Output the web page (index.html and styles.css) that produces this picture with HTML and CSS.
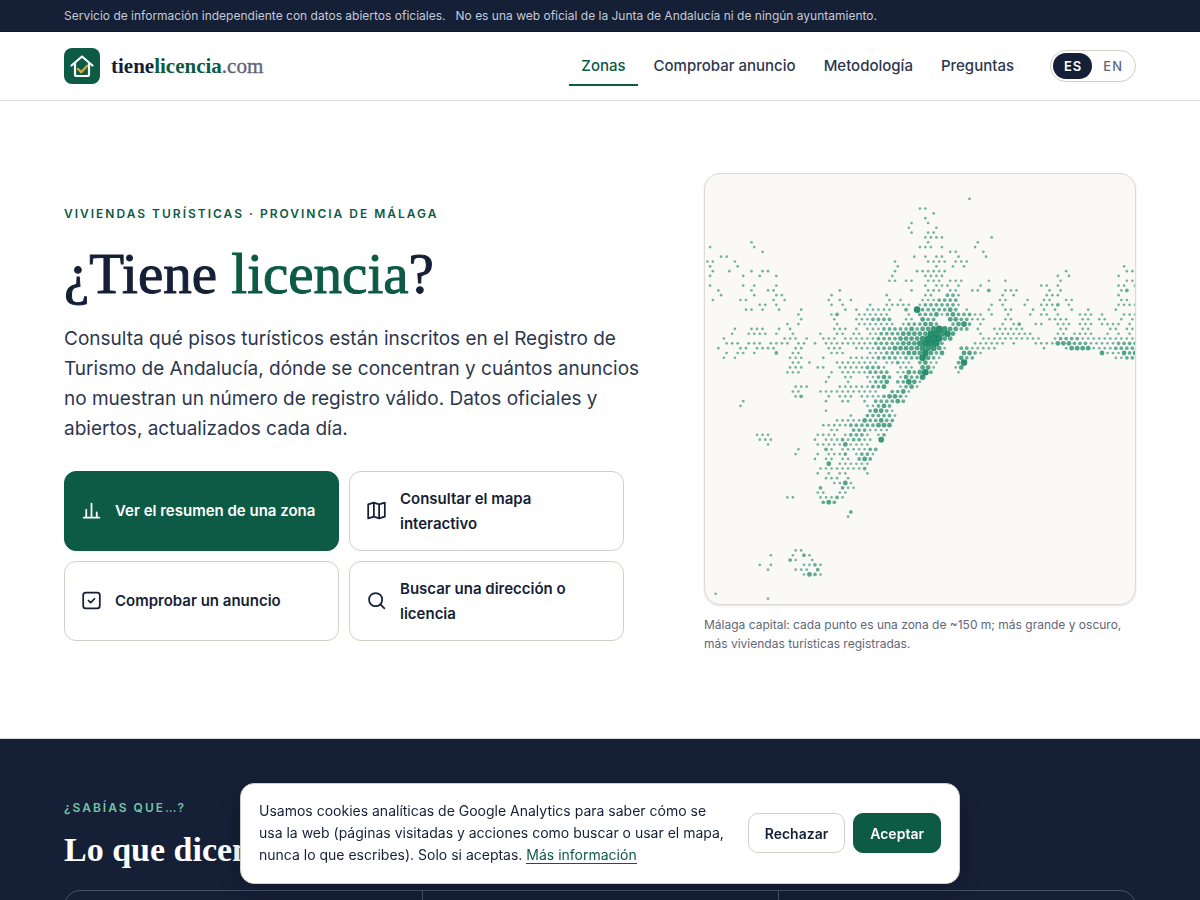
FILE: index.html
```html
<!DOCTYPE html>
<html lang="es">
<head>
<meta charset="utf-8">
<meta name="viewport" content="width=device-width, initial-scale=1">
<title>tienelicencia.com</title>
<link rel="stylesheet" href="styles.css">
</head>
<body>
<div class="notice">
  <div class="wrap notice-text"><span>Servicio de información independiente con datos abiertos oficiales.</span><span>No es una web oficial de la Junta de Andalucía ni de ningún ayuntamiento.</span></div>
</div>
<header class="header">
  <div class="wrap header-row">
    <a class="brand" href="#">
      <svg class="brand-mark" viewBox="0 0 36 36" fill="none" stroke-linecap="round" stroke-linejoin="round" aria-hidden="true">
        <rect width="36" height="36" rx="8" fill="#0d5a45"/>
        <path d="M7.500 17.500 18 8.500l10.500 9M11 15v11.500q0 1.500 1.500 1.500h11q1.500 0 1.500-1.500V15" stroke="#fff" stroke-width="2.200"/>
        <path d="m14 21 3.200 3.200 6-6.400" stroke="#d9a63a" stroke-width="2.400"/>
      </svg>
      <span class="brand-name">tiene<b>licencia</b><i>.com</i></span>
    </a>
    <nav class="nav" aria-label="Principal">
      <a class="nav-link current" href="#">Zonas</a>
      <a class="nav-link" href="#">Comprobar anuncio</a>
      <a class="nav-link" href="#">Metodología</a>
      <a class="nav-link" href="#">Preguntas</a>
    </nav>
    <div class="lang"><a class="lang-link selected" href="#">ES</a><a class="lang-link" href="#">EN</a></div>
  </div>
</header>
<main>
  <section class="hero">
    <div class="wrap hero-grid">
      <div class="intro">
        <p class="eyebrow">Viviendas turísticas · Provincia de Málaga</p>
        <h1 class="title">¿Tiene <span>licencia</span>?</h1>
        <p class="lead">Consulta qué pisos turísticos están inscritos en el Registro de Turismo de Andalucía, dónde se concentran y cuántos anuncios no muestran un número de registro válido. Datos oficiales y abiertos, actualizados cada día.</p>
        <div class="actions">
          <a class="action primary" href="#">
            <svg class="icon" viewBox="0 0 24 24" aria-hidden="true"><path d="M3 20h18M6 20v-9M12 20V4M18 20v-6"/></svg>
            <span>Ver el resumen de una zona</span>
          </a>
          <a class="action" href="#">
            <svg class="icon" viewBox="0 0 24 24" aria-hidden="true"><path d="M9 3 2.500 5v16L9 19l6 2 6.500-2V3L15 5 9 3ZM9 3v16M15 5v16"/></svg>
            <span>Consultar el mapa interactivo</span>
          </a>
          <a class="action" href="#">
            <svg class="icon" viewBox="0 0 24 24" aria-hidden="true"><rect x="2.500" y="3" width="19" height="18" rx="3"/><path d="m8.500 12 2.500 2.500 4.500-4.500"/></svg>
            <span>Comprobar un anuncio</span>
          </a>
          <a class="action" href="#">
            <svg class="icon" viewBox="0 0 24 24" aria-hidden="true"><circle cx="11" cy="11" r="7.500"/><path d="m16.500 16.500 4.500 4.500"/></svg>
            <span>Buscar una dirección o licencia</span>
          </a>
        </div>
      </div>
      <figure class="density">
        <svg id="map" class="map" viewBox="15 12 1290 1290" role="img" aria-label="Mapa de densidad de viviendas turísticas"></svg>
        <figcaption class="caption">Málaga capital: cada punto es una zona de ~150 m; más grande y oscuro, más viviendas turísticas registradas.</figcaption>
      </figure>
    </div>
  </section>
  <section class="facts">
    <div class="wrap">
      <p class="eyebrow light">¿Sabías que…?</p>
      <h2 class="facts-title">Lo que dicen</h2>
      <div class="facts-grid"><div class="fact"></div><div class="fact"></div><div class="fact"></div></div>
    </div>
  </section>
</main>
<aside class="cookies" aria-label="Cookies">
  <p class="cookies-text">Usamos cookies analíticas de Google Analytics para saber cómo se usa la web (páginas visitadas y acciones como buscar o usar el mapa, nunca lo que escribes). Solo si aceptas. <a href="#">Más información</a></p>
  <div class="cookies-buttons">
    <button class="button" type="button">Rechazar</button>
    <button class="button accept" type="button">Aceptar</button>
  </div>
</aside>
<script src="map.js"></script>
</body>
</html>
```
FILE: styles.css
```css
* { box-sizing: border-box; }
body {
  margin: 0;
  background: #fff;
  color: #151f36;
  font-family: Inter, "Liberation Sans", sans-serif;
  font-size: 15px;
  line-height: 25px;
}
p, h1, h2, figure { margin: 0; }
a { color: inherit; text-decoration: none; }
.wrap { max-width: 1200px; margin: 0 auto; padding: 0 64px; }

.notice { background: #151f36; color: #c3cad8; border-bottom: 1px solid #0e1629; font-size: 12px; line-height: 31px; }
.notice-text { display: flex; flex-wrap: wrap; gap: 0 10px; }

.header { border-bottom: 1px solid #dddbd8; }
.header-row { display: flex; align-items: center; min-height: 68px; }
.brand { display: flex; align-items: center; gap: 11px; margin-right: auto; }
.brand-mark { width: 36px; height: 36px; }
.brand-name { font-family: "Liberation Serif", serif; font-size: 21px; font-weight: 700; }
.brand-name b { color: #0d5a45; }
.brand-name i { color: #5f667a; font-style: normal; font-weight: 400; -webkit-text-stroke: 0.400px currentColor; }
.nav { display: flex; gap: 4px; }
.nav-link { padding: 7px 12px 6px; border-bottom: 2px solid transparent; color: #2c374f; font-weight: 500; }
.nav-link.current { color: #0d5a45; border-color: #0d5a45; }
.lang { display: flex; margin-left: 24px; padding: 2px; border: 1px solid #d2d0c4; border-radius: 16px; font-size: 13px; font-weight: 500; line-height: 26px; letter-spacing: 1px; color: #5f667a; }
.lang-link { padding: 0 10px 0 11px; border-radius: 13px; }
.lang-link.selected { background: #151f36; color: #fff; font-weight: 600; }

.hero { padding: 72px 0 85px; border-bottom: 1px solid #dddbd8; }
.hero-grid { display: grid; grid-template-columns: 4fr 3fr; gap: 64px; align-items: center; }
.intro { padding-top: 18px; }
.eyebrow { color: #0d5a45; font-size: 12px; font-weight: 600; line-height: 20px; letter-spacing: 2px; text-transform: uppercase; }
.title { margin-top: 18px; font-family: "Liberation Serif", serif; font-size: 57px; font-weight: 400; line-height: 64px; -webkit-text-stroke: 1px currentColor; }
.title span { color: #0d5a45; }
.lead { margin-top: 18px; color: #2c374f; font-size: 19px; line-height: 30px; }
.actions { display: grid; grid-template-columns: 1fr 1fr; gap: 10px; max-width: 560px; margin-top: 27px; }
.action { display: flex; align-items: center; gap: 13px; min-height: 80px; padding: 14px 16px; border: 1px solid #d2d0c4; border-radius: 12px; font-weight: 600; }
.action.primary { background: #0d5a45; border-color: #0d5a45; color: #fff; }
.icon { flex: none; width: 21px; height: 21px; fill: none; stroke: currentColor; stroke-width: 2; stroke-linecap: round; stroke-linejoin: round; }

.map { display: block; width: 100%; border: 1px solid #dddbd8; border-radius: 16px; background: #faf9f6; box-shadow: 0 1px 2px #151f3620; }
.map circle { fill: #178563; }
.caption { margin-top: 10px; color: #5f667a; font-size: 12px; line-height: 19px; }

.facts { padding: 59px 0 64px; background: #151f36; color: #fff; }
.eyebrow.light { color: #72c5a2; }
.facts-title { margin-top: 12px; font-family: "Liberation Serif", serif; font-size: 34px; font-weight: 700; line-height: 40px; }
.facts-grid { display: grid; grid-template-columns: repeat(3, 1fr); margin-top: 20px; border: 1px solid #46516a; border-radius: 16px; }
.fact { min-height: 160px; }
.fact + .fact { border-left: 1px solid #46516a; }

.cookies { position: fixed; right: 16px; bottom: 16px; left: 16px; display: flex; align-items: center; gap: 16px; max-width: 720px; margin: 0 auto; padding: 16px 18px 17px; border: 1px solid #d2d0c4; border-radius: 14px; background: #fff; box-shadow: 0 8px 24px #0003; }
.cookies-text { flex: 1; font-size: 14px; line-height: 22px; }
.cookies-text a { color: #0d5a45; border-bottom: 1px solid; }
.cookies-buttons { display: flex; gap: 8px; }
.button { height: 40px; padding: 0 16px; border: 1px solid #d2d0c4; border-radius: 10px; background: #fff; color: #151f36; font: inherit; font-size: 14px; font-weight: 600; }
.button.accept { border-color: #0d5a45; background: #0d5a45; color: #fff; }
@media (max-width: 860px) {
  .hero-grid { grid-template-columns: 1fr; }
  .header-row { flex-wrap: wrap; }
}
```
FILE: map.js
```js
// Rows of the hexagonal grid. Each entry is "x" or "x-x" (a run), with an optional ":size".
const rows = {
0: "809", 2: "660 676", 3: "701", 4: "676", 5: "635 685", 6: "627 709", 7: "635 685 701",
8: "676-726 875", 9: "154 685 833", 10: "30 163 660-693 726 825", 11: "188 751 767 850",
12: "64 80 643 676 709 726 775 858", 13: "22 39 105 585 685-734 767-800", 14: "30 113 593 709 759 792 1272",
15: "39 88 154 188 204 585 652-734 1099 1281 1297", 16: "30 130 179 229 577 676-726 1074 1106 1256",
17: "569 585 618 635 685-718 751-784 867 917 1082 1281 1297",
18: "30 130 163 229 676 709 726 742 775 842 1024 1041 1074 1256 1272 1305",
19: "55 154 204 221 419 635 685-718 751 767 817 833 867:2 917-950 1049 1082 1264 1281:2",
20: "64 163 229 246 394 560 676 693 742:2 759:2 775 908 942 1041-1074 1256",
21: "39 121 138 221 254 386 419 452 569 602 668-701 718-767:2 900 917 983 1032 1049 1099 1115 1264 1281",
22: "179 196 229 394 427 510 560-627 660 676-759:2 775 875 908 975 1024-1057 1074:2 1107 1256-1305",
23: "138 154 188 237 303 436 469 502-569 618:2 651:5 668-734:2 751:3 767:2 800 867 917 933 999 1032 1065 1115 1165 1248",
24: "295 394 411:2 477-560 627 660-693:2 709:3 726 742:2 759:3 775-808:2 825 842 875 925 991 1024 1041 1074 1140-1173 1206 1272-1305",
25: "303 403 469-502 519-569:2 618 635 668:3 685:2 701:2 751:3 767:3 784:2 800:2 817-850 917 933 1049-1099 1148 1165 1198 1215 1264 1297",
26: "262 295 411 477-577 610 627:2 643:2 660:2 676:3 693:3 709:2 759:2 775:3 792:4 808:2 842 908 942 958:2 1008 1024 1074-1107 1140-1173 1206-1256 1289",
27: "105 154-188 237 270 403-436 469 502-535 552-618:2 635:3 651:2 668:3 685:3 701:4 718:5 734:4 751:3 767:3 784:2 800:2 834 884-967 1082 1099 1148 1165 1231 1248 1281 1297",
28: "97 146-196 229 278 361 411 427 460 477 510 527 543-594:2 610:3 627:3 643:3 660:3 676:3 693:5 709:5 726:4 742:5 759:3 842 891-991 1074 1090 1123-1173 1222 1256 1289",
29: "72 254-287 320 370-403 436-519 535-585:2 602-651:3 668:4 685:5 701:5 718:5 734:3 751:3 850-1015 1065 1082-1131:2 1148-1305",
30: "80-113 146-179 213-262 295 311 345 378-427 452-510 527-594:2 610-643:3 660:4 676:5 693:5 709:5 726:2 825-908 942 1008-1057 1074-1107:3 1123-1156:2 1173-1239 1256-1305:2",
31: "55 121 138 171-221 287 303 386-419 469-519 535-569:2 585-635:3 651:3 668:4 685:4 701:4 718:3 734 784:2 800:2 817-884 1032 1099 1115-1165:3 1181-1231 1248-1305:2",
32: "80 113 130 163 229:2 278 295 394-427 510-543 560-610:2 627:3 643:3 660:3 676:5 693:3 709:2 726:3 792:3 808:3 825:2 842 1206:3 1222 1239 1256 1272:3 1289:2 1305:3",
33: "72 105 270-303 370 452-519 535-585:2 602 618:2 635:2 651:2 668:5 685:3 701:2 718 784:3 800:2 817:2 1248 1264 1281:2 1297:2",
34: "278 295 328 411-527 560 577 594:2 610 627 660:2 676:3 693 709 775:2 792:5",
35: "270-303 353 370 419-485 502-535:2 552 602-635 668:3 685:3 701 767 784:3",
36: "262-295 394 427-494 510-560:2 593 610 627:3 643:2 660:3 676:5 693:2 775",
37: "386 436 452 502 519 535:2 552:3 569:2 602 618:3 635:2 651:2 668:4",
38: "378 444 510 527:2 543:2 560:3 594:2 610:2 627:4 643:3 660",
39: "287-320 419-502 519:2 535:2 552:3 602 618:2 635:3 651",
40: "278 295 361-411 427-527 577:2 594:2 610:3 627",
41: "287 303:2 386 419-452 485 502-535 552:2 569:3 585:3 602:2 618",
42: "130 378 427 444 494 527-577:2 594:3 610:2", 43: "121 502 519 535:2 552:3 569:2",
44: "378 510:2 527:3 543:3 560:2 577", 45: "452 502-569:2 585", 46: "411-477 494:3 510:2 527:2 543:3 560:2 577:2",
47: "370-436 452:2 469-519:2 535:3 552:3 569:3", 48: "394 411 460:2 477:2 494:2 510-560",
49: "171-204 353-403 436 452-485:2 502 535 552:2", 50: "179-213 345 378-411 427:2 444 460:2 477:2 494 510 543:4",
51: "204 353-419 436:3 452-502", 52: "295 378:2 394 427-494 510:2 527:2", 53: "287 353 386-419 436:2 469 485:2 502:2 519",
54: "345 378 394 427 444 477:2 494:3 510:2", 55: "386:3 419-502", 56: "361-477 494:2", 57: "353 386 419 436 502",
58: "378-411 444", 59: "403 419 436:3 452", 60: "361:2 427:2 444 460", 61: "353 370 419 436",
62: "262 278 361-394 411:2 427", 63: "370:2 386:3 403:2", 65: "452:2", 66: "444", 73: "287 303",
74: "213 278 311:2 328", 75: "270:2 287 336", 76: "179 213 311 328 345:2 361", 77: "204 287-320 353:2",
78: "311 328:3 345:2 361", 82: "47", 83: "204"
};
const step = 16.56;
const radius = [0, 4, 5.6, 7.2, 8.6, 10];
const opacity = [0, 0.6, 0.66, 0.74, 0.84, 0.92];
const map = document.getElementById("map");
for (const [row, runs] of Object.entries(rows)) {
  const origin = 22 + (row % 2 ? 0 : step / 2);
  const column = x => Math.round((x - origin) / step);
  for (const run of runs.split(" ")) {
    const [range, size = 1] = run.split(":");
    const [from, to = from] = range.split("-").map(Number);
    for (let c = column(from); c <= column(to); c++) {
      const dot = document.createElementNS("http://www.w3.org/2000/svg", "circle");
      dot.setAttribute("cx", origin + c * step);
      dot.setAttribute("cy", 86.7 + row * 14.445);
      dot.setAttribute("r", radius[size]);
      dot.setAttribute("opacity", opacity[size]);
      map.append(dot);
    }
  }
}
```
